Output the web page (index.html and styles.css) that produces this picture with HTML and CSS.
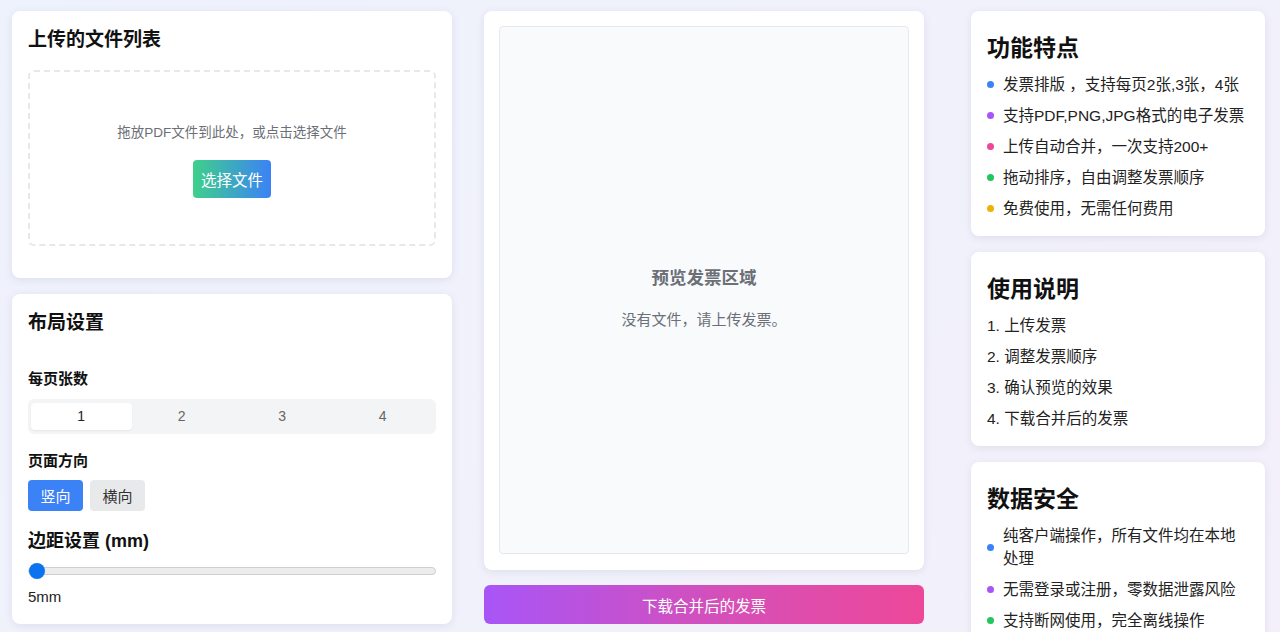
FILE: index.html
```html
<!DOCTYPE html>
<html lang="zh-CN">
<head>
    <meta charset="UTF-8">
    <meta name="viewport" content="width=device-width, initial-scale=1.0">
    <title>发票合并排版</title>
    <link rel="stylesheet" href="styles.css">
</head>
<body>
    <div class="layout">
        <!-- left column -->
        <div class="col-left">
            <section class="card">
                <h2 class="card-title">上传的文件列表</h2>
                <div class="dropzone">
                    <p class="drop-hint">拖放PDF文件到此处，或点击选择文件</p>
                    <button class="btn-pick">选择文件</button>
                </div>
            </section>

            <section class="card settings">
                <h2 class="card-title">布局设置</h2>
                <div class="field-label first">每页张数</div>
                <div class="segmented">
                    <span class="seg active">1</span>
                    <span class="seg">2</span>
                    <span class="seg">3</span>
                    <span class="seg">4</span>
                </div>
                <div class="field-label">页面方向</div>
                <div class="orient">
                    <button class="orient-btn active">竖向</button>
                    <button class="orient-btn">横向</button>
                </div>
                <div class="margin-label">边距设置 (mm)</div>
                <input class="margin-range" type="range" min="5" max="30" value="5">
                <div class="margin-value">5mm</div>
            </section>
        </div>

        <!-- preview -->
        <div class="col-center">
            <section class="card preview-card">
                <div class="preview-box">
                    <div class="preview-title">预览发票区域</div>
                    <div class="preview-sub">没有文件，请上传发票。</div>
                </div>
            </section>
            <button class="btn-download">下载合并后的发票</button>
        </div>

        <!-- sidebar -->
        <aside class="col-right">
            <section class="card info">
                <h3 class="info-title">功能特点</h3>
                <ul class="dots">
                    <li><i class="dot blue"></i><span>发票排版 ，支持每页2张,3张，4张</span></li>
                    <li><i class="dot purple"></i><span>支持PDF,PNG,JPG格式的电子发票</span></li>
                    <li><i class="dot pink"></i><span>上传自动合并，一次支持200+</span></li>
                    <li><i class="dot green"></i><span>拖动排序，自由调整发票顺序</span></li>
                    <li><i class="dot yellow"></i><span>免费使用，无需任何费用</span></li>
                </ul>
            </section>
            <section class="card info">
                <h3 class="info-title">使用说明</h3>
                <ol class="steps">
                    <li>1. 上传发票</li>
                    <li>2. 调整发票顺序</li>
                    <li>3. 确认预览的效果</li>
                    <li>4. 下载合并后的发票</li>
                </ol>
            </section>
            <section class="card info">
                <h3 class="info-title">数据安全</h3>
                <ul class="dots">
                    <li><i class="dot blue"></i><span>纯客户端操作，所有文件均在本地处理</span></li>
                    <li><i class="dot purple"></i><span>无需登录或注册，零数据泄露风险</span></li>
                    <li><i class="dot green"></i><span>支持断网使用，完全离线操作</span></li>
                </ul>
            </section>
        </aside>
    </div>
</body>
</html>
```

FILE: styles.css
```css
body {
   margin: 0;
   font-family: "Liberation Sans", Arial, "Noto Sans CJK SC", sans-serif;
   color: #222;
   background: linear-gradient(135deg, #eef2fc 0%, #f1f1fb 60%, #f4f0fb 100%);
   min-height: 100vh;
}
.layout {
   display: flex;
   align-items: flex-start;
   padding: 11px 15px 20px 12px;
}
.card {
   background: #fff;
   border-radius: 8px;
   box-shadow: 0 2px 8px rgba(60, 72, 110, 0.10);
   box-sizing: border-box;
}
.col-left {
   width: 440px;
   display: flex;
   flex-direction: column;
   gap: 16px;
}
.col-center {
   width: 440px;
   margin-left: 32px;
}
.col-right {
   width: 294px;
   margin-left: auto;
   display: flex;
   flex-direction: column;
   gap: 16px;
}

/* upload */
.col-left .card {
   padding: 16px;
}
.card-title {
   margin: 0;
   font-size: 19px;
   line-height: 26px;
   font-weight: 700;
   color: #111;
}
.dropzone {
   margin: 17px 0 16px;
   height: 176px;
   box-sizing: border-box;
   border: 2px dashed #e6e8ec;
   border-radius: 6px;
   padding-top: 51px;
   text-align: center;
}
.drop-hint {
   margin: 0;
   font-size: 13.5px;
   line-height: 20px;
   color: #6b6f76;
}
.btn-pick {
   margin-top: 17px;
   height: 38px;
   padding: 0 8px;
   border: 0;
   border-radius: 4px;
   font-family: inherit;
   font-size: 15.5px;
   color: #fff;
   background: linear-gradient(90deg, #3fd08a, #3b82f6);
}

/* settings */
.col-left .settings {
   padding: 16px 16px 17px;
}
.field-label {
   margin-top: 17px;
   font-size: 15px;
   line-height: 20px;
   font-weight: 700;
   color: #111;
}
.field-label.first {
   margin-top: 33px;
}
.segmented {
   margin-top: 10px;
   display: grid;
   grid-template-columns: repeat(4, 1fr);
   padding: 4px 3px;
   background: #f3f4f6;
   border-radius: 6px;
}
.seg {
   height: 27px;
   line-height: 27px;
   text-align: center;
   font-size: 14px;
   color: #666;
   border-radius: 4px;
}
.seg.active {
   background: #fff;
   color: #222;
   box-shadow: 0 1px 2px rgba(0, 0, 0, 0.06);
}
.orient {
   margin-top: 9px;
   display: flex;
   gap: 7px;
}
.orient-btn {
   width: 55px;
   height: 31px;
   border: 0;
   border-radius: 4px;
   font-family: inherit;
   font-size: 15px;
   background: #e8e9eb;
   color: #333;
}
.orient-btn.active {
   background: #3b82f6;
   color: #fff;
}
.margin-label {
   margin-top: 17px;
   font-size: 18px;
   line-height: 26px;
   font-weight: 700;
   color: #111;
}
.margin-range {
   display: block;
   width: 100%;
   height: 16px;
   margin: 9px 0 0;
   -webkit-appearance: none;
   appearance: none;
   background: transparent;
}
.margin-range::-webkit-slider-runnable-track {
   height: 8px;
   box-sizing: border-box;
   background: #ececec;
   border: 1px solid #cfcfcf;
   border-radius: 4px;
}
.margin-range::-webkit-slider-thumb {
   -webkit-appearance: none;
   width: 16px;
   height: 16px;
   margin-top: -5px;
   border-radius: 50%;
   background: #0b72f0;
   border: 0;
}
.margin-value {
   margin-top: 8px;
   font-size: 15px;
   line-height: 20px;
   color: #222;
}

/* preview */
.preview-card {
   padding: 15px 15px 16px;
}
.preview-box {
   height: 528px;
   box-sizing: border-box;
   padding-top: 15px;
   background: #f8fafc;
   border: 1px solid #e6e8ec;
   border-radius: 4px;
   display: flex;
   flex-direction: column;
   align-items: center;
   justify-content: center;
}
.preview-title {
   font-size: 17.5px;
   line-height: 26px;
   font-weight: 700;
   color: #6b6f76;
}
.preview-sub {
   margin-top: 19px;
   font-size: 15px;
   line-height: 20px;
   color: #6b6f76;
}
.btn-download {
   display: block;
   width: 100%;
   margin-top: 15px;
   height: 39px;
   border: 0;
   border-radius: 6px;
   font-family: inherit;
   font-size: 15.5px;
   color: #fff;
   background: linear-gradient(90deg, #a855f7, #d64fb8 55%, #ec4899);
}

/* sidebar */
.info {
   padding: 22px 16px 16px;
}
.info-title {
   margin: 0;
   font-size: 23px;
   line-height: 30px;
   font-weight: 700;
   color: #111;
}
.dots, .steps {
   list-style: none;
   margin: 10px 0 0;
   padding: 0;
   display: flex;
   flex-direction: column;
   gap: 8px;
}
.dots li, .steps li {
   font-size: 15.5px;
   line-height: 23px;
   color: #222;
}
.dots li {
   display: flex;
   align-items: center;
}
.dot {
   flex: none;
   width: 7px;
   height: 7px;
   border-radius: 50%;
   margin: 0 9px 0 0;
}
.dot.blue { background: #3b82f6; }
.dot.purple { background: #a855f7; }
.dot.pink { background: #ec4899; }
.dot.green { background: #22c55e; }
.dot.yellow { background: #eab308; }
```
